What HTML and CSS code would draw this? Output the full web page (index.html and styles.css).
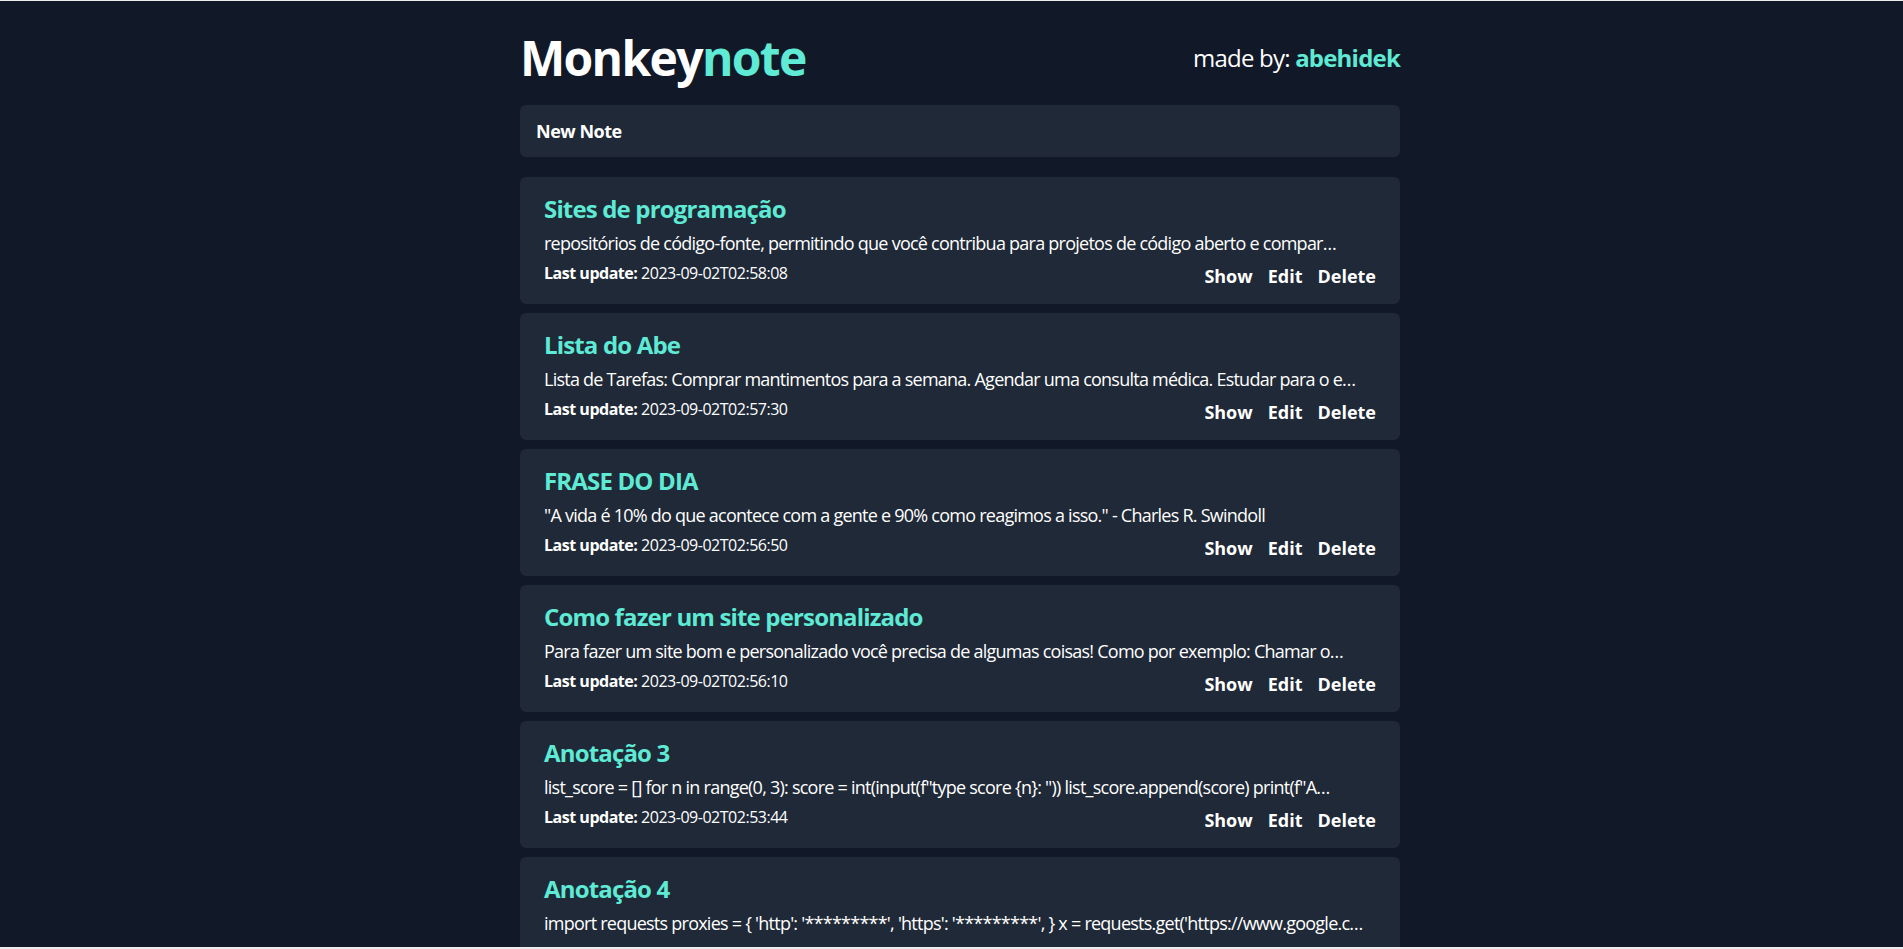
FILE: index.html
```html
<!DOCTYPE html>
<html lang="pt-BR">
<head>
<meta charset="utf-8">
<title>Monkeynote</title>
<link rel="stylesheet" href="styles.css">
</head>
<body>
<div class="page">
  <main class="container">
    <header class="header">
      <h1 class="logo">Monkey<span class="accent">note</span></h1>
      <p class="credit">made by: <a class="author" href="#">abehidek</a></p>
    </header>

    <a class="new-note" href="#">New Note</a>

    <section class="notes">
      <article class="note">
        <h2 class="note-title">Sites de programação</h2>
        <p class="note-body">repositórios de código-fonte, permitindo que você contribua para projetos de código aberto e compar…</p>
        <div class="note-footer">
          <p class="note-date"><strong>Last update:</strong> 2023-09-02T02:58:08</p>
          <div class="actions"><button class="action">Show</button><button class="action">Edit</button><button class="action">Delete</button></div>
        </div>
      </article>

      <article class="note">
        <h2 class="note-title">Lista do Abe</h2>
        <p class="note-body">Lista de Tarefas: Comprar mantimentos para a semana. Agendar uma consulta médica. Estudar para o e…</p>
        <div class="note-footer">
          <p class="note-date"><strong>Last update:</strong> 2023-09-02T02:57:30</p>
          <div class="actions"><button class="action">Show</button><button class="action">Edit</button><button class="action">Delete</button></div>
        </div>
      </article>

      <article class="note">
        <h2 class="note-title">FRASE DO DIA</h2>
        <p class="note-body">"A vida é 10% do que acontece com a gente e 90% como reagimos a isso." - Charles R. Swindoll</p>
        <div class="note-footer">
          <p class="note-date"><strong>Last update:</strong> 2023-09-02T02:56:50</p>
          <div class="actions"><button class="action">Show</button><button class="action">Edit</button><button class="action">Delete</button></div>
        </div>
      </article>

      <article class="note">
        <h2 class="note-title">Como fazer um site personalizado</h2>
        <p class="note-body">Para fazer um site bom e personalizado você precisa de algumas coisas! Como por exemplo: Chamar o…</p>
        <div class="note-footer">
          <p class="note-date"><strong>Last update:</strong> 2023-09-02T02:56:10</p>
          <div class="actions"><button class="action">Show</button><button class="action">Edit</button><button class="action">Delete</button></div>
        </div>
      </article>

      <article class="note">
        <h2 class="note-title">Anotação 3</h2>
        <p class="note-body">list_score = [] for n in range(0, 3): score = int(input(f"type score {n}: ")) list_score.append(score) print(f"A…</p>
        <div class="note-footer">
          <p class="note-date"><strong>Last update:</strong> 2023-09-02T02:53:44</p>
          <div class="actions"><button class="action">Show</button><button class="action">Edit</button><button class="action">Delete</button></div>
        </div>
      </article>

      <article class="note">
        <h2 class="note-title">Anotação 4</h2>
        <p class="note-body">import requests proxies = { 'http': '*********', 'https': '*********', } x = requests.get('https://www.google.c…</p>
        <div class="note-footer">
          <p class="note-date"><strong>Last update:</strong> 2023-09-02T02:52:10</p>
          <div class="actions"><button class="action">Show</button><button class="action">Edit</button><button class="action">Delete</button></div>
        </div>
      </article>
    </section>
  </main>
</div>
</body>
</html>
```

FILE: styles.css
```css
html {
  scrollbar-width: none;
  background: #111827;
}
html::-webkit-scrollbar {
  display: none;
}
body {
  margin: 0;
  background: #111827;
  color: #ffffff;
  font-family: "Open Sans", "Noto Sans", sans-serif;
  letter-spacing: -0.03em;
  border-top: 1px solid #ececec;
}
body::after {
  content: "";
  position: fixed;
  left: 0;
  right: 0;
  bottom: 0;
  height: 2px;
  background: #ececec;
}
.page {
  padding: 33px 0 40px 17px;
}
.container {
  max-width: 880px;
  margin: 0 auto;
}
.header {
  display: flex;
  align-items: center;
  justify-content: space-between;
  height: 48px;
}
.logo {
  margin: 0;
  font-size: 48px;
  line-height: 48px;
  font-weight: 700;
  letter-spacing: -0.035em;
  color: #ffffff;
}
.accent {
  color: #5eead4;
}
.credit {
  margin: 0;
  font-size: 24px;
  line-height: 32px;
  letter-spacing: -0.033em;
  color: #ffffff;
}
.author {
  color: #5eead4;
  font-weight: 700;
  text-decoration: none;
}
.new-note {
  display: block;
  margin-top: 23px;
  padding: 12px 16px;
  background: #1f2937;
  border-radius: 6px;
  color: #ffffff;
  font-size: 18px;
  line-height: 28px;
  font-weight: 700;
  text-decoration: none;
}
.notes {
  display: flex;
  flex-direction: column;
  gap: 9px;
  margin-top: 20px;
}
.note {
  background: #1f2937;
  border-radius: 6px;
  padding: 16px 24px;
  height: 127px;
  box-sizing: border-box;
}
.note-title {
  margin: 0;
  font-size: 24px;
  line-height: 32px;
  font-weight: 700;
  letter-spacing: -0.035em;
  color: #5eead4;
}
.note-body {
  margin: 4px 0 0;
  font-size: 18px;
  line-height: 28px;
  letter-spacing: -0.042em;
  white-space: nowrap;
  overflow: hidden;
  text-overflow: ellipsis;
}
.note-footer {
  display: flex;
  justify-content: space-between;
  align-items: flex-start;
  margin-top: 4px;
}
.note-date {
  margin: 0;
  font-size: 16px;
  line-height: 24px;
}
.actions {
  display: flex;
  gap: 15px;
}
.action {
  background: none;
  border: 0;
  padding: 0;
  margin: 0;
  color: #ffffff;
  font-family: inherit;
  letter-spacing: 0;
  font-size: 18px;
  line-height: 30px;
  font-weight: 700;
  cursor: pointer;
}
```
